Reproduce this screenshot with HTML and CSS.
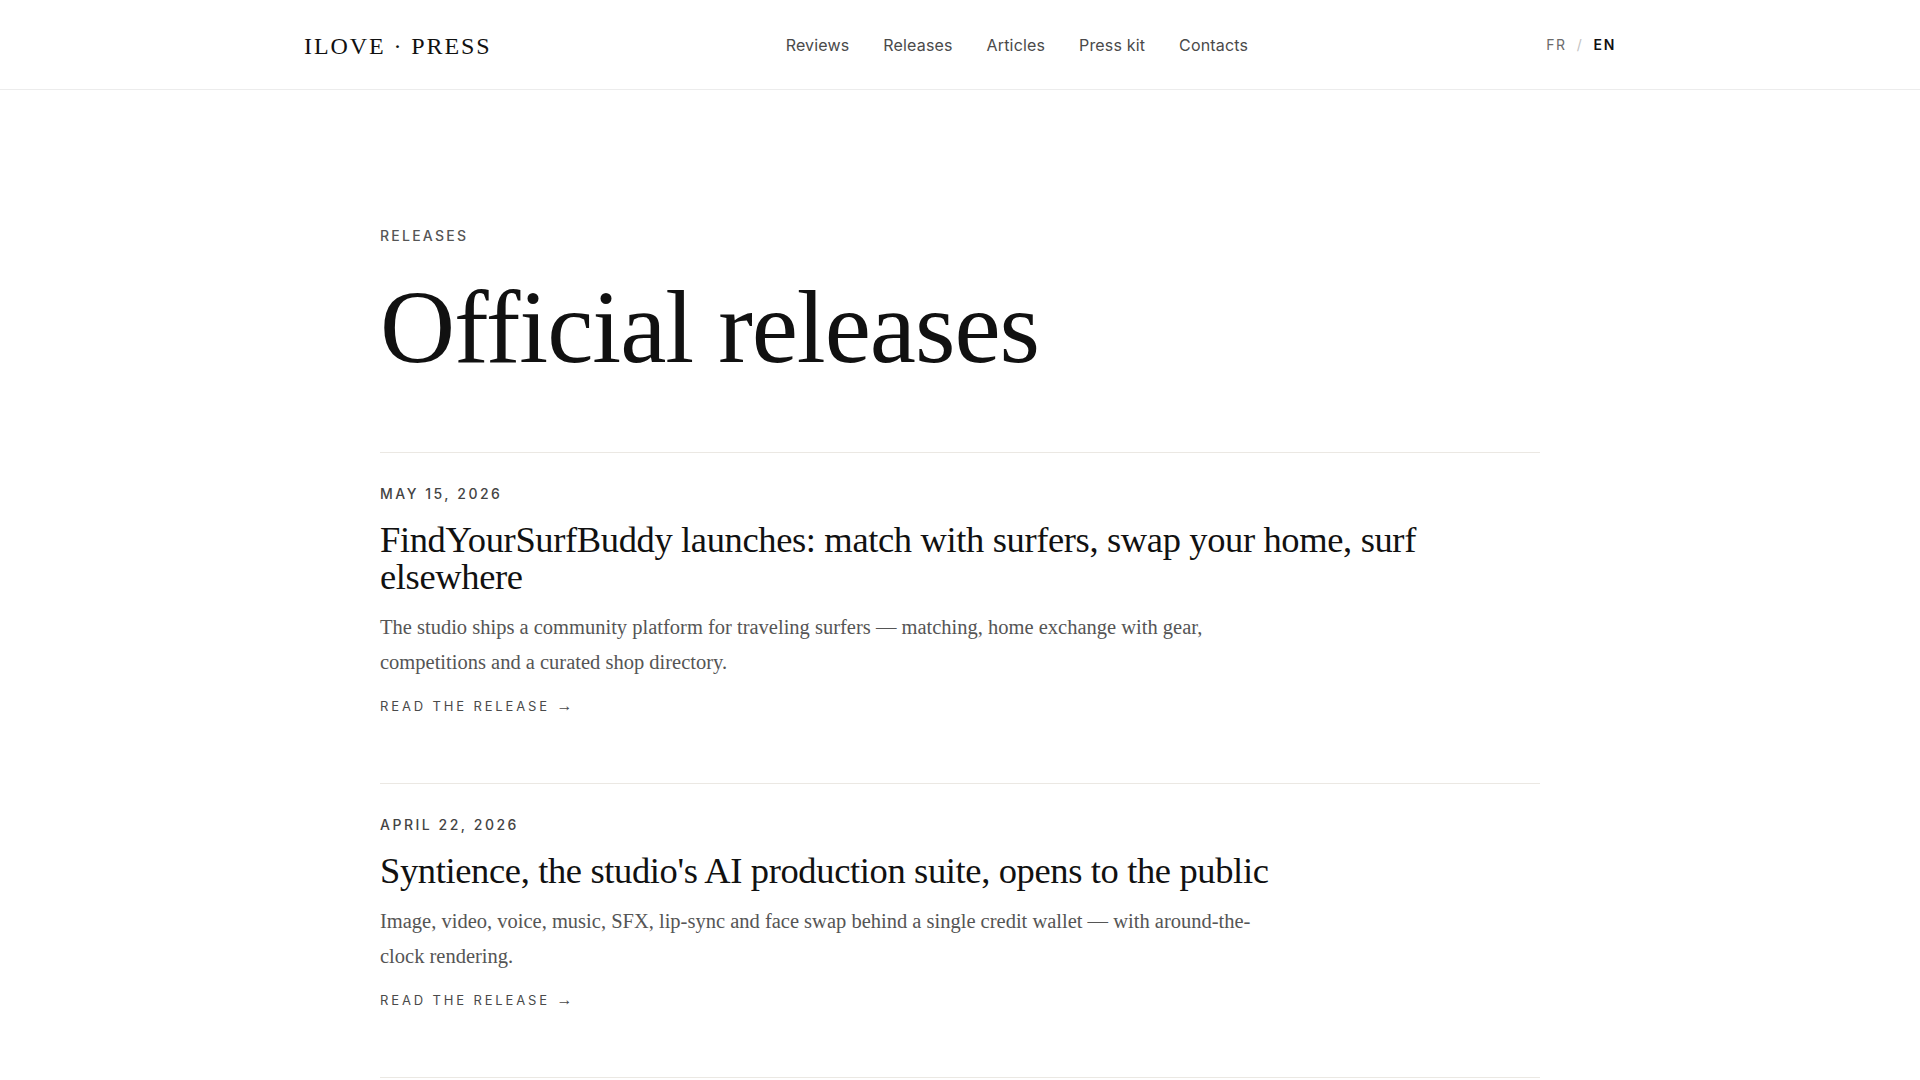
FILE: index.html
```html
<!DOCTYPE html>
<html lang="en">
<head>
    <meta charset="UTF-8">
    <meta name="viewport" content="width=device-width, initial-scale=1.0">
    <title>Official releases — ILOVE · PRESS</title>
    <link rel="stylesheet" href="styles.css">
</head>
<body>

    <header class="site-header">
        <div class="header-inner">
            <a class="logo" href="index.html">ILOVE · PRESS</a>
            <nav class="main-nav">
                <a href="reviews.html">Reviews</a>
                <a href="releases.html">Releases</a>
                <a href="articles.html">Articles</a>
                <a href="press-kit.html">Press kit</a>
                <a href="contacts.html">Contacts</a>
            </nav>
            <div class="lang">
                <a href="#" class="lang-link">FR</a>
                <span class="lang-sep">/</span>
                <a href="#" class="lang-link active">EN</a>
            </div>
        </div>
    </header>

    <main class="page">
        <p class="eyebrow">Releases</p>
        <h1 class="page-title">Official releases</h1>

        <article class="release">
            <p class="release-date">May 15, 2026</p>
            <h2 class="release-title">FindYourSurfBuddy launches: match with surfers, swap your home, surf elsewhere</h2>
            <p class="release-text">The studio ships a community platform for traveling surfers — matching, home exchange with gear, competitions and a curated shop directory.</p>
            <a class="release-link" href="#">Read the release <span class="arrow">→</span></a>
        </article>

        <article class="release">
            <p class="release-date">April 22, 2026</p>
            <h2 class="release-title">Syntience, the studio's AI production suite, opens to the public</h2>
            <p class="release-text">Image, video, voice, music, SFX, lip-sync and face swap behind a single credit wallet — with around-the-clock rendering.</p>
            <a class="release-link" href="#">Read the release <span class="arrow">→</span></a>
        </article>
    </main>

</body>
</html>
```

FILE: styles.css
```css
body {
    margin: 0;
    padding: 0;
    background: #fff;
    color: #111;
    font-family: Inter, "Noto Sans", sans-serif;
}
a {
    color: inherit;
    text-decoration: none;
}

/* header */
.site-header {
    border-bottom: 1px solid #ececec;
}
.header-inner {
    max-width: 1312px;
    height: 89px;
    margin: 0 auto;
    display: flex;
    align-items: center;
    justify-content: space-between;
}
.logo {
    font-family: "Liberation Serif", "DejaVu Serif", serif;
    font-size: 24px;
    letter-spacing: 0.08em;
    color: #111;
    padding-top: 4px;
}
.main-nav {
    display: flex;
    gap: 34px;
    margin-right: 4px;
}
.main-nav a {
    font-size: 16px;
    letter-spacing: 0.01em;
    color: #4a4a4a;
}
.lang {
    display: flex;
    align-items: center;
    gap: 10px;
    font-size: 14px;
    letter-spacing: 0.12em;
}
.lang-link {
    color: #6b6b6b;
}
.lang-link.active {
    color: #111;
    font-weight: 600;
}
.lang-sep {
    color: #c2c2c2;
}

/* page */
.page {
    max-width: 1160px;
    margin: 0 auto;
    padding-top: 138px;
}
.eyebrow {
    margin: 0;
    font-size: 14px;
    line-height: 16px;
    font-weight: 500;
    letter-spacing: 0.16em;
    text-transform: uppercase;
    color: #555;
}
.page-title {
    margin: 26px 0 68px;
    font-family: "Liberation Serif", "DejaVu Serif", serif;
    font-size: 104px;
    line-height: 1.1;
    font-weight: 400;
    letter-spacing: -0.01em;
    color: #111;
}

/* release list */
.release {
    border-top: 1px solid #ebe8e3;
    padding: 33px 0 69px;
}
.release:last-child {
    border-bottom: 1px solid #ebe8e3;
}
.release-date {
    margin: 0;
    font-size: 14px;
    line-height: 16px;
    font-weight: 500;
    letter-spacing: 0.18em;
    text-transform: uppercase;
    color: #444;
}
.release-title {
    margin: 19px 0 15px;
    font-family: "Liberation Serif", "DejaVu Serif", serif;
    font-size: 36.5px;
    line-height: 37px;
    font-weight: 400;
    letter-spacing: -0.01em;
    color: #111;
}
.release-text {
    max-width: 895px;
    margin: 0 0 18px;
    font-family: "Liberation Serif", "DejaVu Serif", serif;
    font-size: 20.5px;
    line-height: 35px;
    color: #555;
}
.release-link {
    display: block;
    font-size: 13px;
    line-height: 16px;
    letter-spacing: 0.22em;
    text-transform: uppercase;
    color: #4a4a4a;
}
.arrow {
    font-family: "Liberation Sans", sans-serif;
    font-size: 16px;
    line-height: 1;
    letter-spacing: 0;
}
```
